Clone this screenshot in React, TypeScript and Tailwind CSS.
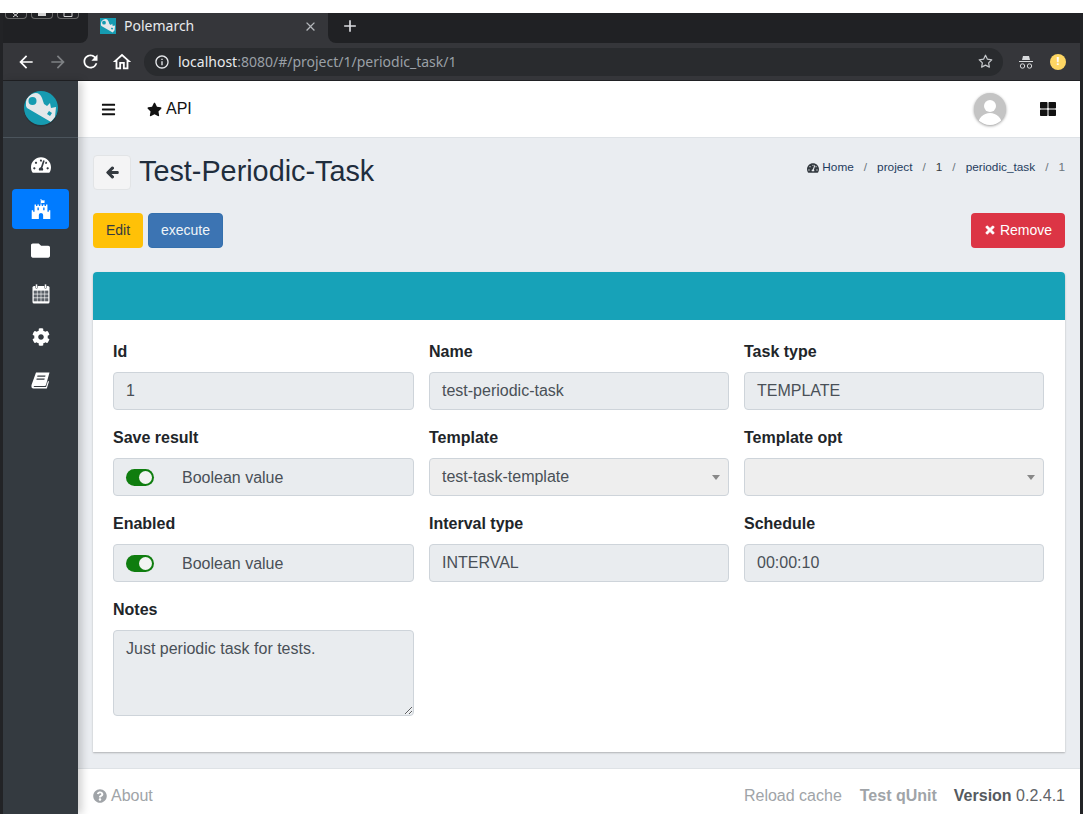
import {
  FaArrowLeft,
  FaBars,
  FaCog,
  FaFolder,
  FaFortAwesome,
  FaQuestionCircle,
  FaStar,
  FaTachometerAlt,
  FaThLarge,
  FaTimes,
} from "react-icons/fa";
import { FiStar } from "react-icons/fi";
import { MdAdd, MdArrowBack, MdArrowForward, MdClose, MdOutlineHome, MdOutlineInfo, MdRefresh } from "react-icons/md";
import type { ReactNode } from "react";

function KeyMark() {
  return (
    <>
      <path d="M2 15 Q1 6 8 3 Q15 0 18 7 L20 13 L23 15 L26 12 L27 17 L32 16 L31 26 L27 31 L3 17 Z" fill="#e4e7ea" />
      <circle cx="8.5" cy="10" r="4" fill="#169bb1" />
      <path d="M25 20 L28 22 L26 25 L23 23 Z" fill="#169bb1" />
    </>
  );
}

function Logo() {
  return (
    <svg width="34" height="36" viewBox="0 0 34 36" className="shrink-0">
      <circle cx="17" cy="18.5" r="17" fill="#1c2a30" opacity="0.5" />
      <clipPath id="logo-round">
        <circle cx="17" cy="17" r="17" />
      </clipPath>
      <g clipPath="url(#logo-round)">
        <rect width="34" height="34" fill="#169bb1" />
        <KeyMark />
      </g>
    </svg>
  );
}

function Favicon() {
  return (
    <svg width="16" height="16" viewBox="0 0 34 34" className="shrink-0">
      <rect width="34" height="34" fill="#169bb1" />
      <KeyMark />
    </svg>
  );
}

function CalendarIcon() {
  return (
    <svg width="18" height="20" viewBox="0 0 18 20">
      <rect x="0.5" y="2" width="17" height="17.5" rx="1.5" fill="#fff" />
      <rect x="3.5" y="0" width="2" height="4.5" rx="1" fill="#fff" stroke="#343a40" strokeWidth="0.5" />
      <rect x="12.5" y="0" width="2" height="4.5" rx="1" fill="#fff" stroke="#343a40" strokeWidth="0.5" />
      <g fill="#5b6168">
        {[6.6, 10.4, 14.2].map((y) =>
          [1.7, 5.5, 9.3, 13.1].map((x) => <rect key={`${x}-${y}`} x={x} y={y} width="3.2" height="3.1" />),
        )}
      </g>
    </svg>
  );
}

function BookIcon() {
  return (
    <svg width="19" height="17" viewBox="0 0 19 17">
      <path d="M5 0.5 H18.5 L15 13 Q14.7 14 13.5 14 H3.5 Q2.4 14 2.8 15 L15 15 L17 9 L18 9.5 L15.8 16.5 H2.5 Q0 16.5 0.5 13 Z" fill="#fff" />
      <path d="M6.5 3.5 H14.5 L14.2 4.8 H6.2 Z M5.7 6.5 H13.7 L13.4 7.8 H5.4 Z" fill="#343a40" />
    </svg>
  );
}

function WindowButton({ children }: { children: ReactNode }) {
  return (
    <span className="h-[6px] w-[22px] overflow-hidden rounded-b border border-t-0 border-[#6a6a6a]">
      <svg width="20" height="5" viewBox="0 0 20 5" stroke="#d4d4d4" fill="none">
        {children}
      </svg>
    </span>
  );
}

function FormLabel({ children }: { children: ReactNode }) {
  return <div className="mb-[10px] h-[21px] text-base leading-[21px] font-bold text-[#212529]">{children}</div>;
}

function Field({ label, value }: { label: string; value: string }) {
  return (
    <div>
      <FormLabel>{label}</FormLabel>
      <div className="flex h-[38px] items-center rounded border border-[#ced4da] bg-[#e9ecef] px-3 text-base text-[#495057]">{value}</div>
    </div>
  );
}

function BoolField({ label }: { label: string }) {
  return (
    <div>
      <FormLabel>{label}</FormLabel>
      <div className="flex h-[38px] items-center rounded border border-[#ced4da] bg-[#e9ecef] pl-3 text-base text-[#495057]">
        <span className="flex h-[17px] w-[28px] items-center justify-end rounded-full bg-[#0f7d0f] pr-[2px]">
          <span className="h-[13px] w-[13px] rounded-full bg-[#f2f4f2]" />
        </span>
        <span className="ml-[28px] pt-0.5">Boolean value</span>
      </div>
    </div>
  );
}

function SelectField({ label, value }: { label: string; value: string }) {
  return (
    <div>
      <FormLabel>{label}</FormLabel>
      <div className="flex h-[38px] items-center justify-between rounded border border-[#ced4da] bg-[#eeeeee] pr-[8px] pl-3 text-base text-[#495057]">
        <span>{value}</span>
        <span className="h-0 w-0 border-x-4 border-t-[5px] border-x-transparent border-t-[#888888]" />
      </div>
    </div>
  );
}

function Crumb({ children }: { children: ReactNode }) {
  return (
    <>
      <span>{children}</span>
      <span className="mx-[10px] text-[#6c757d]">/</span>
    </>
  );
}

const nav = [
  { icon: <FaTachometerAlt size={20} />, row: "h-[38px]" },
  { icon: <FaFortAwesome size={20} />, row: "mt-[5px] h-[40px] rounded bg-[#007bff]" },
  { icon: <FaFolder size={19} />, row: "mt-[2px] h-[38px]" },
  { icon: <CalendarIcon />, row: "mt-[6px] h-[38px]" },
  { icon: <FaCog size={18} />, row: "mt-[5px] h-[38px]" },
  { icon: <BookIcon />, row: "mt-[5px] h-[38px]" },
];

export default function App() {
  return (
    <div className="h-[827px] w-[1084px] overflow-hidden bg-white pt-[13px] font-['Liberation_Sans',Arial,sans-serif]">
      <div className="flex h-[801px] w-[1083px] flex-col overflow-hidden border-r-[3px] border-l-[3px] border-[#222326]">
        {/* browser chrome */}
        <div className="flex h-[30px] shrink-0 bg-[#35363a] font-['Noto_Sans',sans-serif]">
          <div className="flex w-[85px] gap-[4px] rounded-br-lg bg-[#202124] pl-[2px]">
            <WindowButton>
              <path d="M7 0l5 4M12 0L7 4" />
            </WindowButton>
            <WindowButton>
              <path d="M6 1.5h8" strokeWidth="3" />
            </WindowButton>
            <WindowButton>
              <path d="M6 0v3.5h8V0" />
            </WindowButton>
          </div>
          <div className="flex w-[240px] items-center pr-[10px] pb-[4px] pl-[12px] text-[#e8eaed]">
            <Favicon />
            <span className="ml-2 flex-1 text-sm">Polemarch</span>
            <MdClose size={15} className="text-[#b4b7bb]" />
          </div>
          <div className="flex flex-1 items-center rounded-bl-lg bg-[#202124] pb-[4px] pl-[12px]">
            <MdAdd size={20} className="text-[#dadce0]" />
          </div>
        </div>
        <div className="flex h-[38px] shrink-0 items-center border-b border-[#202124] bg-[#35363a] pr-[13px] pl-[13px] font-['Noto_Sans',sans-serif]">
          <MdArrowBack size={20} className="text-white" />
          <MdArrowForward size={20} className="ml-[12px] text-[#7e8184]" />
          <MdRefresh size={21} className="ml-[12px] text-white" />
          <MdOutlineHome size={22} className="ml-[10px] text-white" />
          <div className="ml-[11px] flex h-[28px] w-[859px] shrink-0 items-center rounded-full bg-[#292b2e] pr-[10px] pl-[10px] text-sm">
            <MdOutlineInfo size={16} className="mr-[8px] text-[#e8eaed]" />
            <span className="text-[#e8eaed]">localhost</span>
            <span className="text-[#9aa0a6]">:8080/#/project/1/periodic_task/1</span>
            <FiStar size={15} className="ml-auto text-[#c4c7ca]" />
          </div>
          <svg width="16" height="16" viewBox="0 0 16 16" className="ml-[15px] shrink-0" fill="#d8dadc">
            <path d="M5 2h6l1 4H4zM1 7h14v1H1z" />
            <circle cx="4.5" cy="12" r="2.2" fill="none" stroke="#d8dadc" />
            <circle cx="11.5" cy="12" r="2.2" fill="none" stroke="#d8dadc" />
          </svg>
          <span className="ml-[16px] flex h-4 w-4 shrink-0 items-center justify-center rounded-full bg-[#fdd663] text-[11px] font-bold text-white">!</span>
        </div>

        {/* app */}
        <div className="flex min-h-0 flex-1">
          <aside className="z-10 flex w-[75px] shrink-0 flex-col items-center bg-[#343a40] shadow-[4px_0_8px_rgba(0,0,0,0.18)]">
            <div className="flex h-[57px] w-full items-center justify-center border-b border-[#4b545c]">
              <Logo />
            </div>
            <div className="mt-[8px] flex w-full flex-col px-[9px] text-white">
              {nav.map((item, i) => (
                <div key={i} className={`flex items-center justify-center ${item.row}`}>
                  {item.icon}
                </div>
              ))}
            </div>
          </aside>

          <div className="flex min-w-0 flex-1 flex-col">
            <header className="flex h-[57px] shrink-0 items-center border-b border-[#dee2e6] bg-white pr-[16px] pl-[23px] text-[#111111]">
              <FaBars size={15} />
              <FaStar size={15} className="ml-[31px]" />
              <span className="ml-[4px] text-base">API</span>
              <span className="relative ml-auto flex h-[32px] w-[32px] items-center justify-center overflow-hidden rounded-full bg-[#c4c4c4] shadow-[0_1px_3px_rgba(0,0,0,0.4)]">
                <span className="absolute top-[7px] h-[12px] w-[12px] rounded-full bg-white" />
                <span className="absolute top-[20px] h-[16px] w-[24px] rounded-t-full bg-white" />
              </span>
              <FaThLarge size={16} className="mr-[8px] ml-[34px]" />
            </header>

            <main className="flex-1 bg-[#eaedf1] px-[15px] pt-[17px]">
              <div className="flex h-[35px] items-center">
                <div className="flex h-[35px] w-[38px] items-center justify-center rounded border border-[#e2e4e6] bg-[#f4f4f5] text-[#343a40]">
                  <FaArrowLeft size={13} stroke="currentColor" strokeWidth={40} />
                </div>
                <h1 className="ml-[8px] pb-[3px] text-[28.8px] leading-none text-[#1f2d3d]">Test-Periodic-Task</h1>
                <div className="ml-auto flex items-center pb-[10px] text-[11.8px] text-[#1f3c5e]">
                  <FaTachometerAlt size={12} className="mr-[3px] text-[#343a40]" />
                  <Crumb>Home</Crumb>
                  <Crumb>project</Crumb>
                  <Crumb>
                    <span className="text-[#343a40]">1</span>
                  </Crumb>
                  <Crumb>periodic_task</Crumb>
                  <span className="text-[#6c757d]">1</span>
                </div>
              </div>

              <div className="mt-[23px] flex h-[35px] items-center gap-[5px] text-sm">
                <button className="h-[35px] w-[50px] rounded bg-[#ffc107] pb-[2px] text-[#343a40]">Edit</button>
                <button className="h-[35px] w-[75px] rounded border border-[#3570ad] bg-[#3c74b3] pb-[2px] text-[#f0f4f8]">execute</button>
                <button className="ml-auto flex h-[35px] w-[94px] items-center justify-center gap-1 rounded bg-[#dc3545] pb-[2px] text-white">
                  <FaTimes size={12} stroke="currentColor" strokeWidth={30} />
                  Remove
                </button>
              </div>

              <section className="mt-[24px] overflow-hidden rounded-t-sm bg-white shadow-[0_1px_2px_rgba(0,0,0,0.25)]">
                <div className="h-[48px] bg-[#17a2b8]" />
                <div className="grid grid-cols-[301px_300px_300px] gap-x-[15px] gap-y-[17px] px-[20px] pt-[21px] pb-[36px]">
                  <Field label="Id" value="1" />
                  <Field label="Name" value="test-periodic-task" />
                  <Field label="Task type" value="TEMPLATE" />
                  <BoolField label="Save result" />
                  <SelectField label="Template" value="test-task-template" />
                  <SelectField label="Template opt" value="" />
                  <BoolField label="Enabled" />
                  <Field label="Interval type" value="INTERVAL" />
                  <Field label="Schedule" value="00:00:10" />
                  <div>
                    <FormLabel>Notes</FormLabel>
                    <textarea
                      readOnly
                      value="Just periodic task for tests."
                      className="block h-[86px] w-full rounded border border-[#ced4da] bg-[#e9ecef] px-3 py-[6px] text-base text-[#495057] outline-none"
                    />
                  </div>
                </div>
              </section>
            </main>

            <footer className="flex h-[46px] shrink-0 items-center border-t border-[#dee2e6] bg-white px-[15px] pt-[8px] text-base text-[#a0a4a8]">
              <FaQuestionCircle size={14} className="mr-[4px]" />
              <span>About</span>
              <span className="ml-auto">Reload cache</span>
              <span className="ml-[18px] font-bold">Test qUnit</span>
              <span className="ml-[17px] text-[#5f6367]">
                <b className="text-[#555a5f]">Version</b> 0.2.4.1
              </span>
            </footer>
          </div>
        </div>
      </div>
    </div>
  );
}
